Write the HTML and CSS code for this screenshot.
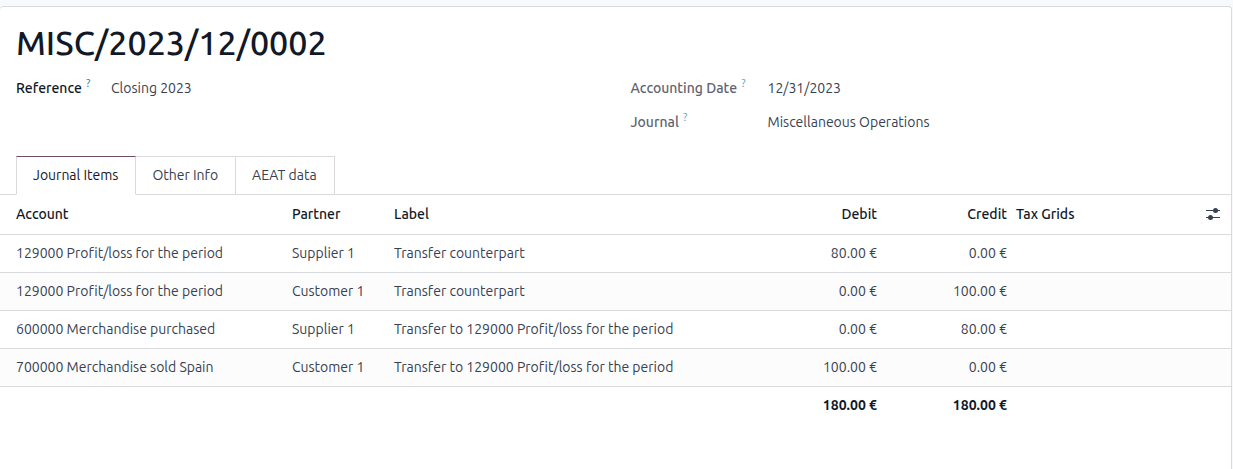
FILE: index.html
```html
<!DOCTYPE html>
<html lang="en">
<head>
  <meta charset="UTF-8">
  <title>MISC/2023/12/0002</title>
  <link rel="stylesheet" href="styles.css">
</head>
<body>
  <main class="sheet">
    <h1>MISC/2023/12/0002</h1>

    <div class="groups">
      <dl class="group group-main">
        <dt>Reference <sup>?</sup></dt>
        <dd>Closing 2023</dd>
      </dl>
      <dl class="group group-side">
        <dt>Accounting Date <sup>?</sup></dt>
        <dd>12/31/2023</dd>
        <dt>Journal <sup>?</sup></dt>
        <dd>Miscellaneous Operations</dd>
      </dl>
    </div>

    <div class="tabs" role="tablist">
      <button class="tab active" role="tab" aria-selected="true">Journal Items</button>
      <button class="tab" role="tab" aria-selected="false">Other Info</button>
      <button class="tab" role="tab" aria-selected="false">AEAT data</button>
    </div>

    <table class="lines">
      <colgroup>
        <col class="col-account">
        <col class="col-partner">
        <col class="col-label">
        <col class="col-debit">
        <col class="col-credit">
        <col class="col-tax">
        <col class="col-options">
      </colgroup>
      <thead>
        <tr>
          <th>Account</th>
          <th>Partner</th>
          <th>Label</th>
          <th class="amount">Debit</th>
          <th class="amount">Credit</th>
          <th>Tax Grids</th>
          <th class="options">
            <button class="options-btn" aria-label="Optional columns">
              <svg width="14" height="14" viewBox="0 0 14 14">
                <path d="M0 2.5h14M0 9.5h14" stroke="currentColor"/>
                <circle cx="9.5" cy="2.5" r="2.5" fill="currentColor"/>
                <circle cx="4.5" cy="9.5" r="2.5" fill="currentColor"/>
              </svg>
            </button>
          </th>
        </tr>
      </thead>
      <tbody>
        <tr>
          <td>129000 Profit/loss for the period</td>
          <td>Supplier 1</td>
          <td>Transfer counterpart</td>
          <td class="amount">80.00 €</td>
          <td class="amount">0.00 €</td>
          <td></td>
          <td></td>
        </tr>
        <tr>
          <td>129000 Profit/loss for the period</td>
          <td>Customer 1</td>
          <td>Transfer counterpart</td>
          <td class="amount">0.00 €</td>
          <td class="amount">100.00 €</td>
          <td></td>
          <td></td>
        </tr>
        <tr>
          <td>600000 Merchandise purchased</td>
          <td>Supplier 1</td>
          <td>Transfer to 129000 Profit/loss for the period</td>
          <td class="amount">0.00 €</td>
          <td class="amount">80.00 €</td>
          <td></td>
          <td></td>
        </tr>
        <tr>
          <td>700000 Merchandise sold Spain</td>
          <td>Customer 1</td>
          <td>Transfer to 129000 Profit/loss for the period</td>
          <td class="amount">100.00 €</td>
          <td class="amount">0.00 €</td>
          <td></td>
          <td></td>
        </tr>
      </tbody>
      <tfoot>
        <tr>
          <td colspan="3"></td>
          <td class="amount">180.00 €</td>
          <td class="amount">180.00 €</td>
          <td></td>
          <td></td>
        </tr>
      </tfoot>
    </table>
  </main>
</body>
</html>
```
FILE: styles.css
```css
* {
  box-sizing: border-box;
}
body {
  display: flex;
  min-height: 100vh;
  margin: 0;
  padding: 6px 1px 0 0;
  background-color: #f8f9fa;
  color: #374151;
  font-family: Ubuntu, "Noto Sans", sans-serif;
  font-size: 14px;
  line-height: 21px;
  font-variant-ligatures: none;
}
.sheet {
  flex: 1;
  padding-top: 14px;
  background-color: #fff;
  border: 1px solid #d8dadd;
  border-width: 1px 1px 0 0;
  border-radius: 4px 4px 0 0;
}
h1 {
  margin: 0 16px;
  color: #111827;
  font-size: 34px;
  font-weight: 500;
  line-height: 42px;
}

/* Field groups */
.groups {
  display: grid;
  grid-template-columns: 1fr 1fr;
  column-gap: 30px;
  padding: 15px 16px 0;
}
.group {
  display: grid;
  row-gap: 13px;
  align-content: start;
  margin: 0;
}
.group-main {
  grid-template-columns: 95px 1fr;
}
.group-side {
  grid-template-columns: 137px 1fr;
}
dt {
  color: #5f636f;
  font-weight: 500;
}
.group-main dt {
  color: #111827;
}
dd {
  margin: 0;
}
sup {
  margin-left: 1px;
  color: #4aa5c0;
  font-size: 11px;
  font-weight: 400;
  line-height: 0;
}
.group-main sup {
  color: #017e9f;
}

/* Tabs */
.tabs {
  display: flex;
  padding: 0 16px;
  margin-top: 23px;
  border-bottom: 1px solid #d8dadd;
}
.tab {
  height: 39px;
  margin-bottom: -1px;
  padding: 0 17px 0 16px;
  background-color: #fff;
  border: 1px solid #d8dadd;
  color: #374151;
  font: inherit;
  cursor: pointer;
}
.tab + .tab {
  border-left: 0;
}
.tab.active {
  border-top-color: #714b67;
  border-bottom-color: #fff;
  color: #111827;
}

/* Journal items */
.lines {
  width: 100%;
  table-layout: fixed;
  border-collapse: separate;
  border-spacing: 0;
}
.col-account {
  width: 287px;
}
.col-partner {
  width: 102px;
}
.col-debit,
.col-credit {
  width: 130px;
}
.col-tax {
  width: 170px;
}
.col-options {
  width: 50px;
}
th,
td {
  height: 38px;
  padding: 0 5px;
  border-bottom: 1px solid #d8dadd;
  text-align: left;
  white-space: nowrap;
}
th {
  height: 40px;
  color: #111827;
  font-weight: 500;
}
th:first-child,
td:first-child {
  padding-left: 16px;
}
tbody tr:nth-child(even) {
  background-color: #fcfcfc;
}
tfoot td {
  height: 37px;
  border-bottom: 0;
  color: #111827;
  font-weight: 600;
}
.lines .amount {
  padding-right: 4px;
  text-align: right;
}
.options-btn {
  display: block;
  margin-left: auto;
  margin-right: 6px;
  padding: 0;
  background: none;
  border: 0;
  color: #374151;
  cursor: pointer;
}
.options-btn svg {
  display: block;
}
```
